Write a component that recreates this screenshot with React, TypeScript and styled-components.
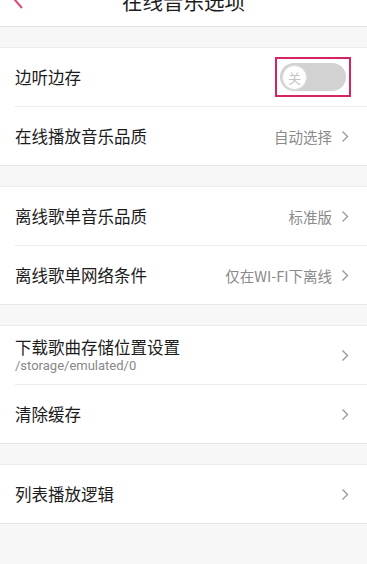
import React from "react";
import styled, { createGlobalStyle } from "styled-components";

const Global = createGlobalStyle`
  body {
    margin: 0;
    background: #f7f7f7;
    font-family: "Noto Sans CJK SC", "Noto Sans", sans-serif;
    color: #1c1c1c;
  }
`;

const Page = styled.div`
  width: 367px;
  min-height: 564px;
  background: #f7f7f7;
  overflow: hidden;
`;

const Header = styled.div`
  position: relative;
  height: 50px;
  margin-top: -24px;
  display: flex;
  align-items: center;
  justify-content: center;
  background: #fff;
  border-bottom: 1px solid #e4e4e4;
`;

const Back = styled.svg`
  position: absolute;
  left: 12px;
  top: 14px;
`;

const Title = styled.div`
  font-size: 20.5px;
  line-height: 26px;
  color: #1c1c1c;
`;

const Gap = styled.div`
  height: 20px;
`;

const Group = styled.div`
  background: #fff;
  border-top: 1px solid #ececec;
  border-bottom: 1px solid #e6e6e6;
`;

const Row = styled.div<{ $last?: boolean }>`
  height: 58px;
  margin-left: 15px;
  padding-right: 18px;
  display: flex;
  align-items: center;
  justify-content: space-between;
  border-bottom: ${(p) => (p.$last ? "none" : "1px solid #ececec")};
`;

const Labels = styled.div`
  display: flex;
  flex-direction: column;
`;

const Label = styled.div`
  font-size: 16.5px;
  line-height: 22px;
  color: #1c1c1c;
`;

const Sub = styled.div`
  font-family: "Roboto", "Noto Sans", sans-serif;
  font-size: 13px;
  line-height: 16px;
  color: #888;
`;

const Right = styled.div`
  display: flex;
  align-items: center;
  gap: 9px;
  font-size: 14.5px;
  color: #8a8a8a;
`;

const Highlight = styled.div`
  margin-right: -2px;
  padding: 4px 3px;
  border: 2px solid #d6245e;
`;

const Track = styled.div`
  width: 66px;
  height: 28px;
  border-radius: 14px;
  background: #d2d2d2;
  display: flex;
  align-items: center;
  padding-left: 2px;
  box-sizing: border-box;
`;

const Knob = styled.div`
  width: 25px;
  height: 25px;
  border-radius: 50%;
  background: #fff;
  border: 1px solid #dcdcdc;
  box-sizing: border-box;
  display: flex;
  align-items: center;
  justify-content: center;
  font-size: 13px;
  color: #c4c4c4;
`;

const Chevron = () => (
  <svg width="8" height="13" viewBox="0 0 8 13">
    <path d="M1.5 1.5 L6.5 6.5 L1.5 11.5" fill="none" stroke="#9a9a9a" strokeWidth="1.4" />
  </svg>
);

const Item = ({
  label,
  sub,
  value,
  last,
}: {
  label: string;
  sub?: string;
  value?: string;
  last?: boolean;
}) => (
  <Row $last={last}>
    <Labels>
      <Label>{label}</Label>
      {sub && <Sub>{sub}</Sub>}
    </Labels>
    <Right>
      {value && <span>{value}</span>}
      <Chevron />
    </Right>
  </Row>
);

export default function App() {
  return (
    <Page>
      <Global />
      <Header>
        <Back width="12" height="20" viewBox="0 0 12 20">
          <path d="M10 2 L3 10 L10 18" fill="none" stroke="#e0447a" strokeWidth="2" />
        </Back>
        <Title>在线音乐选项</Title>
      </Header>
      <Gap />
      <Group>
        <Row>
          <Label>边听边存</Label>
          <Highlight>
            <Track>
              <Knob>关</Knob>
            </Track>
          </Highlight>
        </Row>
        <Item label="在线播放音乐品质" value="自动选择" last />
      </Group>
      <Gap />
      <Group>
        <Item label="离线歌单音乐品质" value="标准版" />
        <Item label="离线歌单网络条件" value="仅在WI-FI下离线" last />
      </Group>
      <Gap />
      <Group>
        <Item label="下载歌曲存储位置设置" sub="/storage/emulated/0" />
        <Item label="清除缓存" last />
      </Group>
      <Gap />
      <Group>
        <Item label="列表播放逻辑" last />
      </Group>
    </Page>
  );
}
